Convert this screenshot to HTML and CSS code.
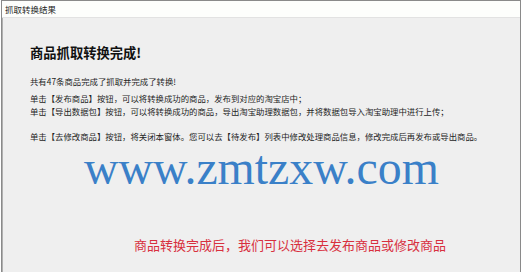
FILE: index.html
```html
<!DOCTYPE html>
<html lang="zh-CN">
<head>
<meta charset="utf-8">
<title>抓取转换结果</title>
<link rel="stylesheet" href="styles.css">
</head>
<body>
<div class="window">
  <div class="titlebar">抓取转换结果</div>
  <div class="content">
    <h1 class="heading">商品抓取转换完成!</h1>
    <p class="line first">共有47条商品完成了抓取并完成了转换!</p>
    <div class="group">
      <p class="line">单击【发布商品】按钮，可以将转换成功的商品，发布到对应的淘宝店中；</p>
      <p class="line">单击【导出数据包】按钮，可以将转换成功的商品，导出淘宝助理数据包，并将数据包导入淘宝助理中进行上传；</p>
    </div>
    <p class="line last">单击【去修改商品】按钮，将关闭本窗体。您可以去【待发布】列表中修改处理商品信息，修改完成后再发布或导出商品。</p>
    <div class="watermark">www.zmtzxw.com</div>
    <div class="caption">商品转换完成后，我们可以选择去发布商品或修改商品</div>
  </div>
</div>
</body>
</html>
```
FILE: styles.css
```css
html, body {
  margin: 0;
  padding: 0;
  background: #ffffff;
}
body {
  width: 522px;
  height: 272px;
  overflow: hidden;
  font-family: "Noto Sans CJK SC", "Noto Sans", sans-serif;
}
.window {
  margin-left: 1px;
  width: 518px;
  height: 272px;
  border: 1px solid #8a8a8a;
  border-bottom: none;
  display: flex;
  flex-direction: column;
  background: #efefef;
}
.titlebar {
  height: 16px;
  line-height: 16px;
  background: #fdfefc;
  border-bottom: 1px solid #e2e2e2;
  padding-left: 3px;
  font-size: 8.5px;
  color: #222;
}
.content {
  flex: 1;
  padding: 27px 0 0 27px;
  background: #efefef;
  border-left: 1px solid #b0b0b0;
}
.heading {
  margin: 0;
  font-size: 13.3px;
  line-height: 16px;
  font-weight: bold;
  color: #111;
}
.line {
  margin: 0;
  font-size: 8.4px;
  line-height: 13px;
  color: #1e1e1e;
  white-space: nowrap;
}
.first {
  margin-top: 14px;
}
.group {
  margin-top: 4px;
}
.last {
  margin-top: 12px;
}
.watermark {
  margin-left: 54px;
  font-family: "Liberation Serif", "Times New Roman", serif;
  font-size: 47.8px;
  line-height: 50px;
  color: #3a80c8;
  white-space: nowrap;
}
.caption {
  margin: 44px 0 0 104px;
  font-size: 13px;
  line-height: 16px;
  color: #d8303e;
  white-space: nowrap;
}
```
